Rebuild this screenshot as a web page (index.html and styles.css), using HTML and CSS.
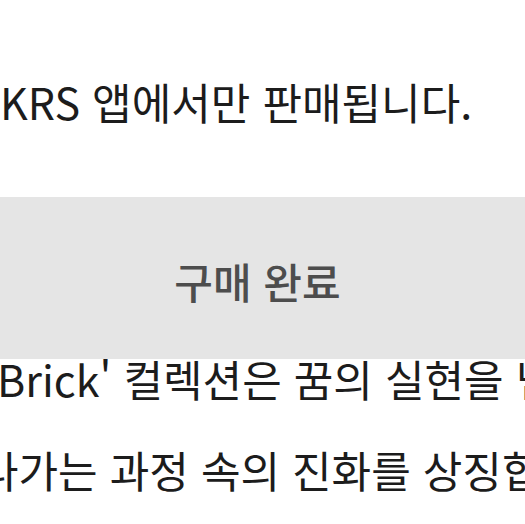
FILE: index.html
```html
<!DOCTYPE html>
<html lang="ko">
<head>
<meta charset="utf-8">
<title>구매 완료</title>
<link rel="stylesheet" href="styles.css">
</head>
<body>
<main class="page">
  <p class="line">KRS 앱에서만 판매됩니다.</p>
  <div class="buy-bar"><button class="buy" type="button">구매 완료</button></div>
  <p class="line line-quote">'Brick' 컬렉션은 꿈의 실현을 넘어</p>
  <p class="line line-cut">나가는 과정 속의 진화를 상징합니다.</p>
</main>
</body>
</html>
```
FILE: styles.css
```css
html, body {
  margin: 0;
  padding: 0;
  background: #ffffff;
}
body {
  width: 525px;
  height: 524px;
  overflow: hidden;
  font-family: "Noto Sans CJK KR", "Noto Sans", sans-serif;
}
.page {
  display: flex;
  flex-direction: column;
  padding-top: 56px;
}
.line {
  margin: 0;
  font-size: 43px;
  line-height: 91px;
  height: 91px;
  color: #1c1c1c;
  white-space: nowrap;
}
.line-quote {
  margin-left: -15px;
}
.line-cut {
  margin-left: -21px;
}
.buy-bar {
  margin-top: 50px;
  margin-bottom: -26px;
  height: 162px;
  background: #e5e5e5;
  display: flex;
  align-items: center;
  justify-content: center;
}
.buy {
  border: 0;
  background: transparent;
  padding: 0;
  font-family: inherit;
  font-size: 42px;
  font-weight: 500;
  color: #4d4d4d;
  margin-left: -10px;
  margin-top: 4px;
}
```
